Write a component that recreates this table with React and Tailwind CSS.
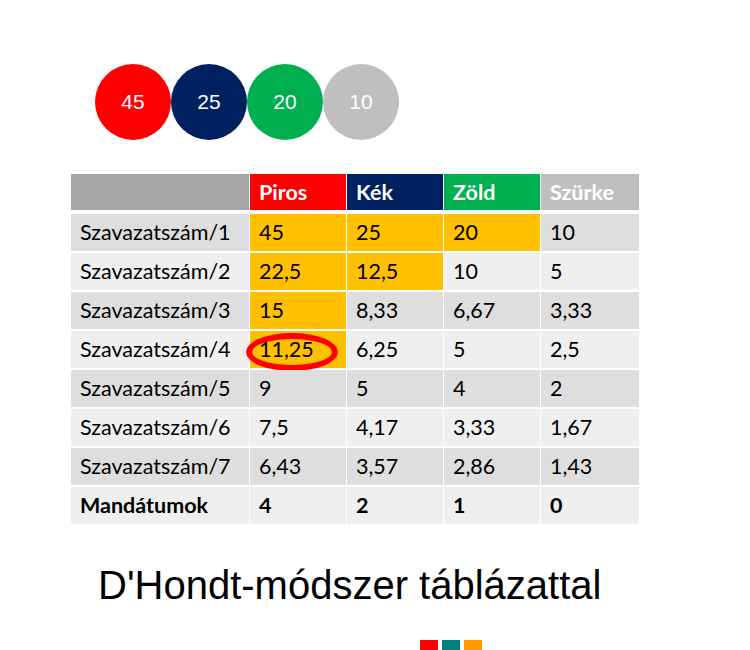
import React from 'react';

const PARTIES = [
  { name: 'Piros', votes: 45, circle: 'bg-[#ff0000]', head: 'bg-[#ff0000]' },
  { name: 'Kék', votes: 25, circle: 'bg-[#002060]', head: 'bg-[#002060]' },
  { name: 'Zöld', votes: 20, circle: 'bg-[#00b050]', head: 'bg-[#00b050]' },
  { name: 'Szürke', votes: 10, circle: 'bg-[#bfbfbf]', head: 'bg-[#bfbfbf]' },
];

// értékek soronként, és hogy melyik cella kap mandátumot (sárga)
const ROWS = [
  { label: 'Szavazatszám/1', values: ['45', '25', '20', '10'], won: [true, true, true, false] },
  { label: 'Szavazatszám/2', values: ['22,5', '12,5', '10', '5'], won: [true, true, false, false] },
  { label: 'Szavazatszám/3', values: ['15', '8,33', '6,67', '3,33'], won: [true, false, false, false] },
  { label: 'Szavazatszám/4', values: ['11,25', '6,25', '5', '2,5'], won: [true, false, false, false], circled: 0 },
  { label: 'Szavazatszám/5', values: ['9', '5', '4', '2'], won: [false, false, false, false] },
  { label: 'Szavazatszám/6', values: ['7,5', '4,17', '3,33', '1,67'], won: [false, false, false, false] },
  { label: 'Szavazatszám/7', values: ['6,43', '3,57', '2,86', '1,43'], won: [false, false, false, false] },
];

const SEATS = ['4', '2', '1', '0'];

const COLS = 'grid grid-cols-[178px_96px_96px_96px_98px] gap-x-px';

const App = () => {
  return (
    <div className="w-[750px] h-[650px] bg-white overflow-hidden font-['Liberation_Sans',Arial,sans-serif]">
      {/* Körök */}
      <div className="flex pl-[95px] pt-[64px]">
        {PARTIES.map((p) => (
          <div
            key={p.name}
            className={`w-[76px] h-[76px] rounded-full ${p.circle} flex items-center justify-center text-white text-[21px]`}
          >
            {p.votes}
          </div>
        ))}
      </div>

      {/* Táblázat */}
      <div className="ml-[71px] mt-[34px] w-[568px] font-['Lato','Open_Sans',sans-serif] text-[21.5px] text-black">
        <div className={`${COLS} h-[36px] mb-[4px]`}>
          <div className="bg-[#a5a5a5]" />
          {PARTIES.map((p) => (
            <div key={p.name} className={`${p.head} text-white font-bold flex items-center pl-[9px]`}>
              {p.name}
            </div>
          ))}
        </div>

        <div className="flex flex-col gap-y-[2px]">
          {ROWS.map((row, i) => {
            const bg = i % 2 === 0 ? 'bg-[#dedede]' : 'bg-[#efefef]';
            return (
              <div key={row.label} className={`${COLS} h-[37px]`}>
                <div className={`${bg} flex items-center pl-[9px]`}>{row.label}</div>
                {row.values.map((v, j) => (
                  <div
                    key={j}
                    className={`${row.won[j] ? 'bg-[#ffc000]' : bg} relative flex items-center pl-[9px]`}
                  >
                    {v}
                    {row.circled === j && (
                      <span className="absolute left-[-4px] top-[2px] w-[92px] h-[38px] rounded-[50%] border-[6px] border-[#ff0000]" />
                    )}
                  </div>
                ))}
              </div>
            );
          })}
          <div className={`${COLS} h-[37px] font-bold`}>
            <div className="bg-[#efefef] flex items-center pl-[9px]">Mandátumok</div>
            {SEATS.map((s, j) => (
              <div key={j} className="bg-[#efefef] flex items-center pl-[9px]">
                {s}
              </div>
            ))}
          </div>
        </div>
      </div>

      {/* Cím */}
      <div className="pl-[98px] mt-[41px] text-[40px] leading-none text-black">D'Hondt-módszer táblázattal</div>

      {/* Dísz négyzetek */}
      <div className="flex gap-[4px] pl-[420px] mt-[35px]">
        <div className="w-[18px] h-[10px] bg-[#ff0000]" />
        <div className="w-[18px] h-[10px] bg-[#008080]" />
        <div className="w-[18px] h-[10px] bg-[#ff9900]" />
      </div>
    </div>
  );
};

export default App;
